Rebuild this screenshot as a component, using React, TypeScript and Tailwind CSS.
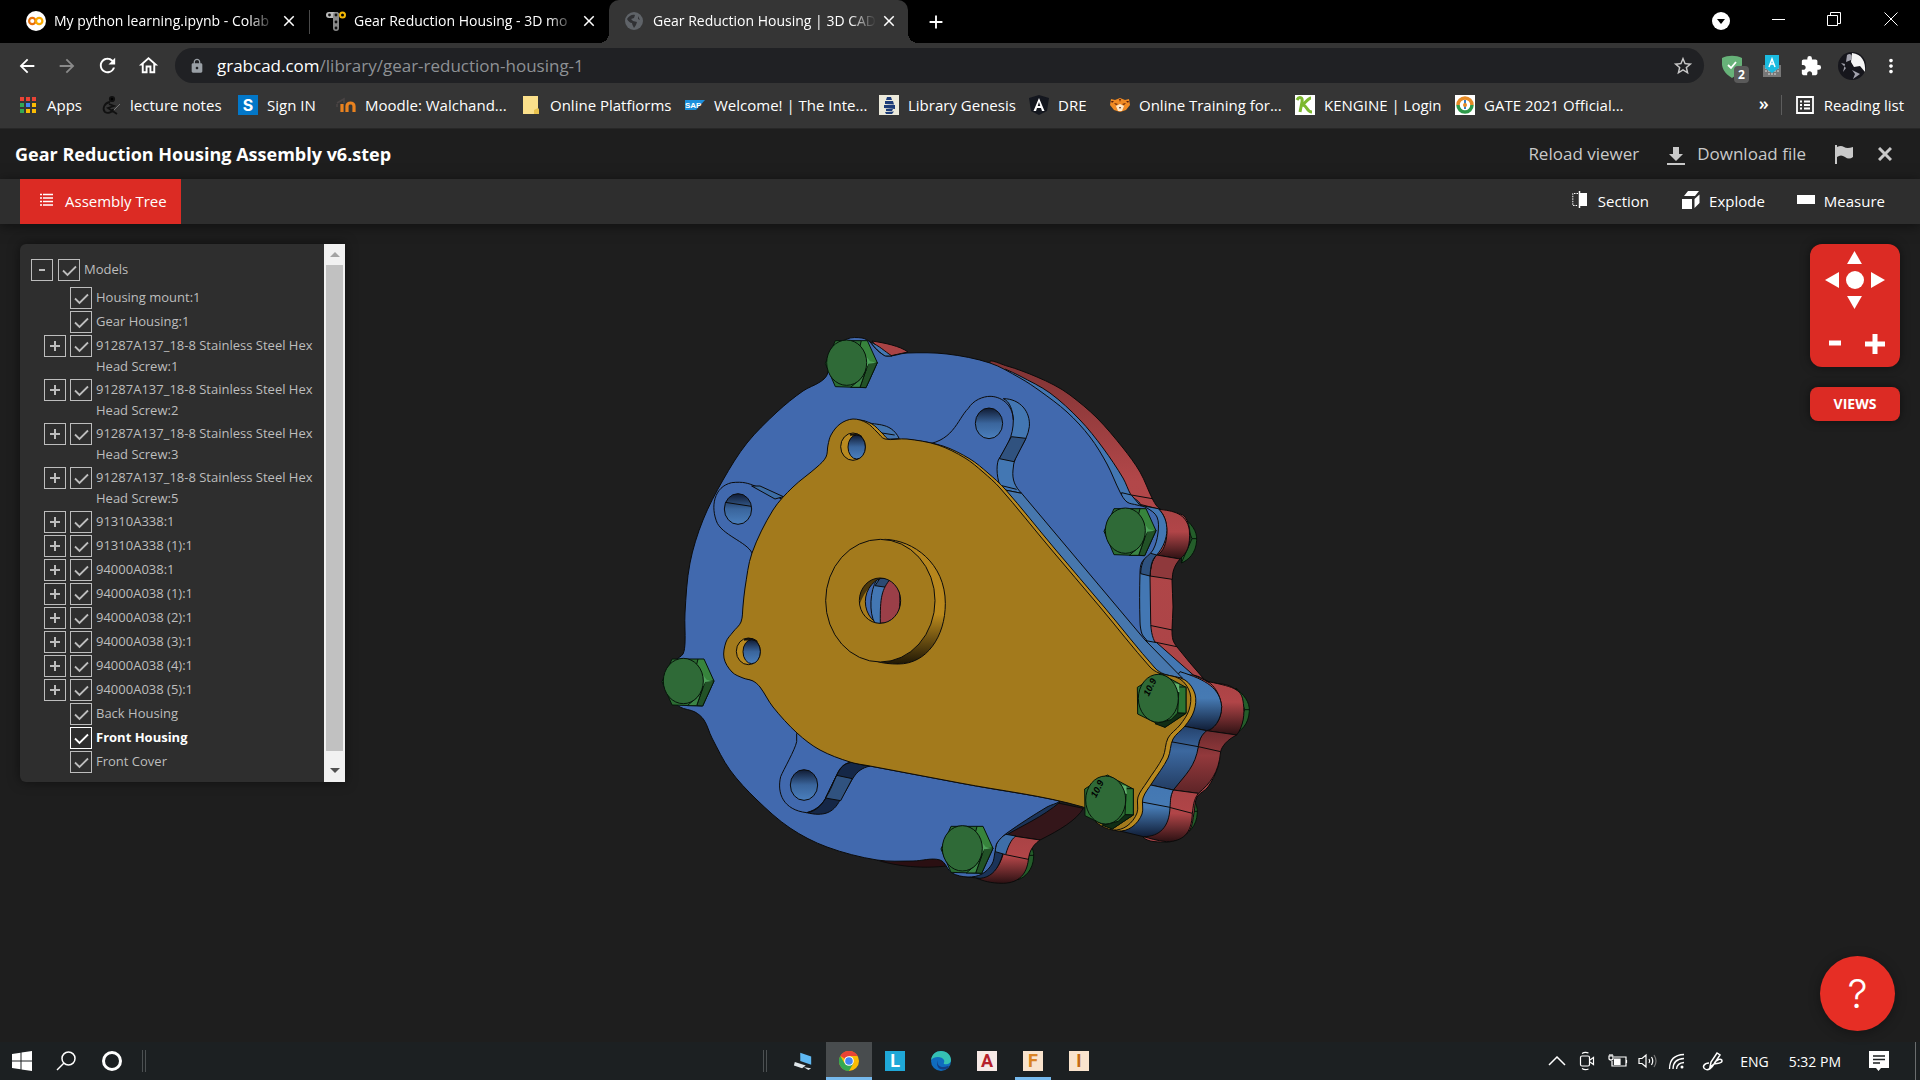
import { useState, type ReactNode } from "react";
import {
  MdArrowBack,
  MdArrowForward,
  MdRefresh,
  MdOutlineHome,
  MdLock,
  MdStarBorder,
  MdExtension,
  MdMoreVert,
  MdClose,
  MdAdd,
} from "react-icons/md";

type Pt = [number, number];

/** Closed or open Catmull-Rom curve through the given points. */
function smooth(pts: Pt[], closed = false): string {
  const n = pts.length;
  const at = (i: number): Pt => (closed ? pts[(i + n) % n] : pts[Math.max(0, Math.min(n - 1, i))]);
  let d = `M${pts[0][0]} ${pts[0][1]}`;
  const count = closed ? n : n - 1;
  for (let i = 0; i < count; i++) {
    const [p0, p1, p2, p3] = [at(i - 1), at(i), at(i + 1), at(i + 2)];
    const len = Math.hypot(p2[0] - p1[0], p2[1] - p1[1]);
    const tangent = (a: Pt, b: Pt): Pt => {
      const l = Math.hypot(b[0] - a[0], b[1] - a[1]) || 1;
      return [((b[0] - a[0]) / l) * len * 0.33, ((b[1] - a[1]) / l) * len * 0.33];
    };
    const t1 = tangent(p0, p2);
    const t2 = tangent(p1, p3);
    d += `C${(p1[0] + t1[0]).toFixed(1)} ${(p1[1] + t1[1]).toFixed(1)} ${(p2[0] - t2[0]).toFixed(1)} ${(p2[1] - t2[1]).toFixed(1)} ${p2[0]} ${p2[1]}`;
  }
  return closed ? d + "Z" : d;
}

const RED_BODY: Pt[] = [
  [990, 363], [1007, 366], [1022, 371], [1037, 377], [1054, 385], [1070, 395], [1097, 418], [1123, 448], [1140, 472], [1153, 500], [1160, 509],
  [1173, 512], [1185, 517], [1190, 533], [1188, 547], [1180, 558], [1173, 568], [1172, 580], [1173, 607], [1172, 630],
  [1173, 640], [1177, 647], [1203, 678], [1208, 682], [1227, 685], [1238, 692], [1243, 707], [1242, 723], [1235, 735],
  [1227, 740], [1220, 752], [1218, 767], [1208, 787], [1197, 797], [1194, 813], [1190, 830], [1180, 838], [1167, 842],
  [1143, 837], [1090, 760], [1050, 560], [1020, 400],
];

const BLUE_EDGE: Pt[] = [
  [1005, 369], [1020, 376], [1050, 393], [1080, 420], [1103, 448], [1123, 478], [1131, 495], [1140, 506], [1120, 520], [1060, 440],
];

const BLUE_BODY: Pt[] = [
  [827, 375], [820, 382], [803, 391], [777, 412], [747, 443], [723, 480], [703, 520], [690, 563], [685, 613],
  [685, 643], [683, 654], [676, 661], [674, 700], [680, 707], [695, 712], [704, 720], [712, 738], [730, 770], [757, 800],
  [790, 828], [827, 847], [877, 860], [913, 861], [940, 860], [952, 873], [968, 877], [982, 874], [992, 864], [995, 852],
  [997, 843], [1007, 833], [1047, 807], [1060, 801], [1100, 760], [1143, 700], [1147, 642], [1142, 634], [1140, 622],
  [1140, 573], [1142, 562], [1153, 550], [1158, 533], [1157, 517], [1147, 508], [1137, 505], [1127, 502], [1120, 492],
  [1107, 464], [1090, 437], [1067, 412], [1040, 391], [1020, 378], [990, 363], [947, 354], [907, 353], [887, 356], [877, 350],
  [870, 342], [862, 338], [847, 339], [834, 350],
];

const GOLD_BODY: Pt[] = [
  [828, 445], [831, 435], [840, 424], [853, 419], [867, 423], [877, 432], [885, 439], [907, 439], [938, 445],
  [965, 458], [983, 472], [1000, 488], [1050, 548], [1100, 607], [1150, 667], [1159, 673], [1180, 679], [1190, 693], [1189, 710],
  [1180, 725], [1168, 738], [1163, 757], [1147, 782], [1138, 797], [1137, 813], [1127, 826], [1113, 830], [1097, 823],
  [1083, 807], [960, 783], [870, 766], [850, 762], [820, 750], [797, 733], [773, 707], [760, 687], [753, 681],
  [743, 678], [732, 672], [724, 658], [726, 642], [733, 632], [741, 622], [743, 606], [745, 588], [752, 553],
  [773, 510], [793, 487], [817, 467], [826, 457],
];

function Bolt({ x, y }: { x: number; y: number }) {
  return (
    <g transform={`translate(${x} ${y})`} stroke="#06140a" strokeWidth="3" strokeLinejoin="round">
      <path d="M-64 2L-34-66H44L92 0L58 75L-34 72Z" fill="#2c6d33" />
      <path d="M44-66H62L92 0L66 0L40-50Z" fill="#37843c" />
      <path d="M66 0L92 0L58 75L40 74Z" fill="#225227" />
      <path d="M58-20L70-4L92 0L66 3L57 20Z" fill="#4fa25b" stroke="none" />
      <path d="M40 50L58 22L40 74H12Z" fill="#3b8545" />
      <ellipse rx="60" ry="68" fill="#2f6a37" />
    </g>
  );
}

function MarkedBolt({ x, y }: { x: number; y: number }) {
  return (
    <g transform={`translate(${x} ${y})`} stroke="#06140a" strokeWidth="3" strokeLinejoin="round">
      <path d="M-63-33L5-75L83-33V45L20 87L-62 47Z" fill="#2c6d33" />
      <path d="M62-34H83V45L58 44Z" fill="#2b7433" />
      <path d="M58 44L83 45L20 87L-10 76L38 64Z" fill="#102d14" />
      <path d="M46-46L62-42L64-18L56-20Z" fill="#62b36e" stroke="none" />
      <ellipse rx="60" ry="72" fill="#2f6a37" />
      <text
        transform="rotate(-64)"
        x="-8"
        y="-28"
        fontFamily="Liberation Sans, sans-serif"
        fontWeight="700"
        fontStyle="italic"
        fontSize="28"
        fill="#000"
        stroke="none"
      >
        10.9
      </text>
    </g>
  );
}

function Nut({ x, y }: { x: number; y: number }) {
  return (
    <g transform={`translate(${x} ${y})`} stroke="#06140a" strokeWidth="3">
      <path d="M-14-70C8-50 28-30 26 0C24 40 0 60-20 68Z" fill="#245d2a" />
      <path d="M-14-70L12-5L-20 68M12-5H26" fill="none" />
    </g>
  );
}

function GearHousing() {
  return (
    <svg viewBox="0 0 1920 1920" className="h-[640px] w-[640px]" role="img" aria-label="Gear reduction housing model">
      <defs>
        <linearGradient id="hole" x1="0" y1="0" x2="0" y2="1">
          <stop offset="0" stopColor="#101b33" />
          <stop offset=".5" stopColor="#3a659c" />
          <stop offset="1" stopColor="#4a7fbd" />
        </linearGradient>
        <linearGradient id="blueLug" x1="0" y1="0" x2="0" y2="1">
          <stop offset="0" stopColor="#4377b3" />
          <stop offset=".45" stopColor="#467ab3" />
          <stop offset="1" stopColor="#101d36" />
        </linearGradient>
        <linearGradient id="redLug" x1="0" y1="0" x2="0" y2="1">
          <stop offset="0" stopColor="#a94345" />
          <stop offset=".45" stopColor="#b14548" />
          <stop offset="1" stopColor="#2c1113" />
        </linearGradient>
        <linearGradient id="blueDip" x1="0" y1="0" x2="0" y2="1">
          <stop offset="0" stopColor="#23406a" />
          <stop offset=".4" stopColor="#3c689f" />
          <stop offset="1" stopColor="#233d63" />
        </linearGradient>
        <linearGradient id="redDip" x1="0" y1="0" x2="0" y2="1">
          <stop offset="0" stopColor="#6b2a2d" />
          <stop offset=".4" stopColor="#93393c" />
          <stop offset="1" stopColor="#5d2427" />
        </linearGradient>
        <linearGradient id="goldRim" x1="0" y1="0" x2="0" y2="1">
          <stop offset="0" stopColor="#b3831c" />
          <stop offset=".6" stopColor="#bb8a1d" />
          <stop offset="1" stopColor="#1f1705" />
        </linearGradient>
        <linearGradient id="redArc" x1="0" y1="0" x2="0" y2="1">
          <stop offset="0" stopColor="#7f3334" />
          <stop offset=".25" stopColor="#b24749" />
          <stop offset="1" stopColor="#a64245" />
        </linearGradient>
      </defs>

      {/* nuts behind the flange */}
      <Nut x={1644} y={682} />
      <Nut x={1802} y={1195} />
      <Nut x={1646} y={1500} />
      <Nut x={1155} y={1632} />

      {/* back housing */}
      <g transform="scale(3) translate(-640 -313)" stroke="#0b0b0b" strokeWidth="1">
        <path d={smooth(RED_BODY, true)} fill="url(#redArc)" />
        <path d="M872 341C885 343 900 346 908 352L885 357Z" fill="#a94345" />
        <path d="M877 860C905 869 940 869 962 863V855Z" fill="#2a0f12" />
      </g>
      <g transform="translate(960 861)" stroke="#0b0b0b" strokeWidth="3">
        <path d="M275 605L370 625C350 660 300 690 240 720L140 705Z" fill="#34161a" />
        <path d="M140 705L240 720C212 740 208 760 205 780C200 820 180 848 130 850C90 850 70 842 50 835C100 830 130 800 140 705Z" fill="url(#redLug)" />
        <path d="M700 225C760 240 780 280 785 320C785 360 760 390 740 392L830 405C850 380 855 340 850 310C846 270 830 262 745 245Z" fill="url(#redLug)" />
        <path d="M740 392L830 405C800 420 785 440 782 455C776 520 750 550 715 580L640 570C680 520 700 480 715 440C718 420 725 400 740 392Z" fill="url(#redDip)" />
        <path d="M640 570L715 580C700 600 700 620 697 640C695 700 670 724 620 725C590 722 570 715 550 710C600 700 625 680 628 620C630 600 633 580 640 570Z" fill="url(#redLug)" />
        <path d="M715 440L782 455M628 622L697 640M137 764L205 778M540 70L637 90M555 120L650 140" fill="none" />
      </g>
      <g transform="translate(900 21)" stroke="#0b0b0b" strokeWidth="3">
        <path d="M574 525L637 536M600 553L660 568" />
        <path d="M655 568C700 572 740 580 748 630C752 680 740 700 720 717L650 705C690 690 690 590 655 568Z" fill="url(#redLug)" />
        <path d="M650 705L720 717C700 740 697 760 697 778L630 768C632 740 636 720 650 705Z" fill="#8f393c" />
      </g>

      {/* front housing: edge, then face */}
      <g transform="scale(3) translate(-640 -313)" stroke="#0b0b0b" strokeWidth="1">
        <path d={smooth(BLUE_EDGE)} fill="#4377b3" />
      </g>
      <g transform="translate(900 21)" stroke="#0b0b0b" strokeWidth="3">
        <path d="M545 518L574 525L600 556L655 566C690 600 690 660 650 705C634 720 632 740 630 768L632 900C632 940 640 960 650 975L600 960L540 640Z" fill="#4377b3" />
        <path d="M650 705C634 720 632 740 630 768L602 761C602 740 610 715 625 698Z" fill="#2f527f" />
      </g>
      <g transform="translate(960 861)" stroke="#0b0b0b" strokeWidth="3">
        <path d="M548 120L590 128L700 225L620 225L560 200Z" fill="#4377b3" />
        <path d="M660 215C740 240 780 265 785 320C785 360 760 390 740 392L655 375L600 300Z" fill="url(#blueLug)" />
        <path d="M655 375L740 392C718 410 716 430 715 440C705 500 680 520 640 570L550 550C580 500 620 470 632 425C635 400 640 390 655 375Z" fill="url(#blueDip)" />
        <path d="M632 425L715 440" />
        <path d="M550 550L640 570C630 590 632 600 630 622C628 680 600 710 550 710L480 693C530 690 535 640 535 600Z" fill="url(#blueLug)" />
        <path d="M535 604L630 622" />
        <path d="M250 600L300 606C250 650 180 680 140 705C130 760 120 830 60 835L0 828L60 790L100 700Z" fill="#1b3358" />
        <path d="M106 755L137 764C146 730 160 712 168 708L138 703C110 715 106 740 106 755Z" fill="#3e6ea8" />
      </g>
      <g transform="scale(3) translate(-640 -313)" stroke="#0b0b0b" strokeWidth="1">
        <path d={smooth(BLUE_BODY, true)} fill="#4169ae" />
        <path d="M870 342C880 346 884 351 892 356L885 356C876 350 874 346 870 342Z" fill="#4377b3" />
      </g>

      {/* front housing: raised lugs */}
      <g transform="translate(60 21)" stroke="#0b0b0b" strokeWidth="3" fill="none">
        <path d="M278 705C270 670 195 650 172 610C150 560 162 500 215 488C250 484 265 490 285 498L365 537" />
        <path d="M275 498H300L370 530L345 537Z" fill="#3d6da5" />
        <ellipse cx="234" cy="567" rx="41" ry="46" fill="url(#hole)" />
        <path d="M196 547L274 559" />
        <path d="M612 303C640 320 690 300 718 356L675 358Z" fill="#4475ae" />
        <path d="M640 335L704 345" />
      </g>
      <g transform="translate(900 21)" stroke="#0b0b0b" strokeWidth="3" fill="none">
        <path d="M190 236C240 236 272 275 268 320C262 370 220 400 219 450C216 480 225 500 245 520L185 508C170 480 168 440 175 420C200 380 220 350 220 300C218 270 210 245 190 236Z" fill="#4377b3" />
        <path d="M214 350L258 355L222 425L178 416Z" fill="#30527f" />
        <path d="M-60 375C40 370 50 300 85 265C100 240 130 229 150 229C180 229 218 250 220 300" />
        <ellipse cx="147" cy="310" rx="41" ry="46" fill="url(#hole)" />
        <path d="M185 497L230 508" />
        <path d="M185 508L245 520L615 960L728 1075L610 1055Z" fill="#4777ad" />
      </g>
      <g transform="translate(0 861)" stroke="#0b0b0b" strokeWidth="3" fill="none">
        <path d="M690 498C640 510 640 540 600 600C580 640 550 650 500 638C560 620 560 580 590 526C600 505 610 490 635 487Z" fill="#152747" />
        <path d="M590 526L637 536L602 602L556 594Z" fill="#30527f" />
        <path d="M470 400V425C465 450 430 510 422 530C410 580 430 630 500 638C530 635 550 610 562 585C590 540 590 490 635 487" />
        <ellipse cx="492" cy="555" rx="41" ry="46" fill="url(#hole)" />
      </g>

      {/* front cover: rim, then face */}
      <g transform="scale(3) translate(-640 -313)" stroke="#0b0b0b" strokeWidth="1">
        <path d={smooth(GOLD_BODY, true)} fill="#b98a1f" transform="translate(5 1)" />
        <path d={smooth(GOLD_BODY, true)} fill="#a37a1c" />
      </g>

      <g transform="translate(60 21)" stroke="#0b0b0b" strokeWidth="3">
        <path d="M674 658C760 660 856 730 856 850C856 950 800 1032 715 1032C690 1032 670 1030 650 1024Z" fill="url(#goldRim)" />
        <ellipse cx="661" cy="842" rx="164" ry="184" fill="#a37a1c" />
        <clipPath id="bore">
          <ellipse cx="660" cy="842" rx="62" ry="68" />
        </clipPath>
        <g clipPath="url(#bore)">
          <rect x="590" y="760" width="150" height="160" fill="#a87c1c" />
          <path d="M590 760H740L700 785C650 770 620 800 600 850Z" fill="#4b380d" stroke="none" />
          <ellipse cx="680" cy="845" rx="64" ry="72" fill="#4169ae" />
          <path d="M650 780C630 810 626 880 645 910L700 915V770Z" fill="#4377b3" />
          <path d="M645 797L680 802L692 775H660Z" fill="#2c4a73" />
          <path d="M692 775C665 810 660 830 661 910L740 900V780Z" fill="#9b3f48" />
          <path d="M712 900C722 860 720 830 718 810" fill="none" />
        </g>
        <ellipse cx="660" cy="842" rx="62" ry="68" fill="none" />
        <ellipse cx="579" cy="380" rx="37" ry="41" fill="#b98a1f" />
        <path d="M570 345C590 338 600 345 606 350L590 346Z" fill="#3b2b0a" />
        <ellipse cx="590" cy="381" rx="26" ry="36" fill="url(#hole)" />
      </g>
      <g transform="translate(0 861)" stroke="#0b0b0b" strokeWidth="3">
        <ellipse cx="325" cy="154" rx="36" ry="40" fill="#b98a1f" />
        <path d="M312 120C330 110 345 118 352 124L335 120Z" fill="#3b2b0a" />
        <ellipse cx="335" cy="155" rx="26" ry="36" fill="url(#hole)" />
      </g>

      <Bolt x={620} y={149} />
      <Bolt x={1456} y={653} />
      <Bolt x={130} y={1104} />
      <Bolt x={967} y={1606} />
      <MarkedBolt x={1555} y={1156} />
      <MarkedBolt x={1397} y={1461} />
    </svg>
  );
}

/* ---------- browser chrome ---------- */

function ColabIcon() {
  return (
    <svg viewBox="0 0 20 20" className="h-5 w-5">
      <circle cx="10" cy="10" r="10" fill="#fff" />
      <circle cx="6.3" cy="10" r="3.2" fill="none" stroke="#e8710a" strokeWidth="2.2" />
      <circle cx="13.2" cy="10" r="3.2" fill="none" stroke="#f9ab00" strokeWidth="2.2" />
    </svg>
  );
}

function PartsIcon() {
  return (
    <svg viewBox="0 0 20 20" className="h-5 w-5">
      <rect x="0" y="1" width="13" height="6" rx="3" fill="#bbb" />
      <rect x="7" y="1" width="6" height="19" rx="3" fill="#8a8a8a" />
      <circle cx="3.5" cy="4" r="1.4" fill="#111" />
      <circle cx="10" cy="4" r="1.4" fill="#111" />
      <circle cx="10" cy="11" r="1.4" fill="#111" />
      <circle cx="10" cy="17" r="1.4" fill="#111" />
      <circle cx="16.5" cy="4" r="2.5" fill="none" stroke="#f2b705" strokeWidth="2" />
    </svg>
  );
}

function GlobeIcon() {
  return (
    <svg viewBox="0 0 18 18" className="h-[18px] w-[18px]">
      <circle cx="9" cy="9" r="9" fill="#5f6368" />
      <path d="M2 7C4 4 7 2 10 3L9 6L6 7L8 9L12 10L11 13L9 16C8 14 7 12 7 11C5 11 3 9 2 7ZM13 4L15 8L13 7Z" fill="#303134" />
    </svg>
  );
}

function Tab({ icon, title, active }: { icon: ReactNode; title: string; active?: boolean }) {
  return (
    <div
      className={
        active
          ? "relative flex h-full w-[299px] items-center rounded-t-[10px] bg-[#353535] pr-2.5 pb-0.5 pl-4"
          : "relative flex h-full w-[299px] items-center pr-2.5 pb-0.5 pl-4"
      }
    >
      {active && (
        <>
          <span className="absolute bottom-0 -left-2.5 h-2.5 w-2.5 bg-[radial-gradient(circle_at_0_0,#000_10px,#353535_10px)]" />
          <span className="absolute -right-2.5 bottom-0 h-2.5 w-2.5 bg-[radial-gradient(circle_at_100%_0,#000_10px,#353535_10px)]" />
        </>
      )}
      <span className="flex w-7 shrink-0">{icon}</span>
      <span className="flex-1 text-[14px] whitespace-nowrap text-white [mask-image:linear-gradient(to_right,#000_88%,transparent)]">
        {title}
      </span>
      <button aria-label={`Close ${title}`} className="ml-1 flex h-5 w-5 items-center justify-center text-white">
        <MdClose className="h-[18px] w-[18px]" />
      </button>
    </div>
  );
}

function BookmarkIcon({ name }: { name: string }) {
  switch (name) {
    case "apps":
      return (
        <svg viewBox="0 0 20 20" className="h-5 w-5">
          {["#ea4335", "#ea4335", "#ea4335", "#34a853", "#4285f4", "#fbbc04", "#34a853", "#fbbc04", "#fbbc04"].map((c, i) => (
            <rect key={i} x={2 + (i % 3) * 6} y={2 + Math.floor(i / 3) * 6} width="4" height="4" fill={c} />
          ))}
        </svg>
      );
    case "notes":
      return (
        <svg viewBox="0 0 20 20" className="h-5 w-5" fill="none" stroke="#111" strokeWidth="1.8">
          <circle cx="11" cy="4" r="2.2" fill="#000" />
          <path d="M9 7C3 8 1 14 4 17C7 19 12 17 12 14M8 9L13 11L7 13L16 19" />
          <path d="M19 9L13 15" stroke="#777" strokeWidth="1" />
        </svg>
      );
    case "s":
      return (
        <span className="flex h-5 w-5 items-center justify-center bg-[#0277c8] font-[Inter] text-base font-bold text-white">
          S
        </span>
      );
    case "moodle":
      return (
        <svg viewBox="0 0 20 20" className="h-5 w-5" fill="none" stroke="#e9821f" strokeWidth="3.2">
          <path d="M6 17V9M11 17V11C11 7 18 7 18 11V17" />
          <path d="M1 8L8 4L8 8M1 9V12" stroke="#4a4444" strokeWidth="1.6" />
        </svg>
      );
    case "folder":
      return (
        <svg viewBox="0 0 20 20" className="h-5 w-5">
          <path d="M2 1H17V13L18 15V19H2Z" fill="#fbe08b" />
          <path d="M13 19V15L17 13L18 15V19Z" fill="#e9c34e" />
        </svg>
      );
    case "sap":
      return (
        <svg viewBox="0 0 20 20" className="h-5 w-5">
          <path d="M0 5H20L11 15H0Z" fill="#1b8fdc" />
          <text x="0" y="13" fontSize="8" fontWeight="700" fontFamily="Liberation Sans, sans-serif" fill="#fff">
            SAP
          </text>
        </svg>
      );
    case "libgen":
      return (
        <svg viewBox="0 0 20 20" className="h-5 w-5">
          <rect width="20" height="20" fill="#eceadb" />
          <path d="M8 2L12 2L13 5L7 5ZM6 6L14 6L15 9.500L6 9ZM5 10L16 10L16 14L5 13ZM7 14H14L13 16H7ZM6 17L15 16.500L13 19H7Z" fill="#1d3c78" />
        </svg>
      );
    case "angular":
      return (
        <svg viewBox="0 0 20 20" className="h-5 w-5">
          <path d="M10 0L20 3L18 16L10 20L2 16L0 3Z" fill="#14171f" />
          <path d="M10 3L4.5 16H7L8 13H12L13 16H15.500ZM10 7L11.300 11H8.700Z" fill="#fff" fillRule="evenodd" />
        </svg>
      );
    case "tiger":
      return (
        <svg viewBox="0 0 20 20" className="h-5 w-5">
          <path d="M1 4L5 5L10 3L15 5L19 4L20 10L16 15L10 17L4 15L0 10Z" fill="#f08a24" />
          <path d="M6 11L10 9L14 11L12 16H8Z" fill="#fbe6c8" />
          <path d="M4 8L8 9L6 10ZM16 8L12 9L14 10ZM9 4H11L10 7ZM9 12H11L10 14ZM1 6L4 6L2 8ZM19 6L16 6L18 8Z" fill="#5b1f0a" />
        </svg>
      );
    case "k":
      return (
        <svg viewBox="0 0 20 20" className="h-5 w-5">
          <rect width="20" height="20" fill="#fff" />
          <path d="M2 5C4 1 8 2 7 7L5 17M16 3C13 3 11 8 7 10C12 9 11 17 17 17" fill="none" stroke="#7cb82f" strokeWidth="3" />
        </svg>
      );
    default:
      return (
        <svg viewBox="0 0 20 20" className="h-5 w-5">
          <rect width="20" height="20" fill="#fff" />
          <path d="M3 10A7 7 0 0 1 17 10" fill="none" stroke="#e58a26" strokeWidth="3.500" />
          <path d="M3 10A7 7 0 0 0 17 10" fill="none" stroke="#2e9a4a" strokeWidth="3.500" />
          <path d="M10 5V14" stroke="#3a7fc4" strokeWidth="2" />
          <circle cx="10" cy="10" r="2" fill="#e58a26" />
        </svg>
      );
  }
}

const BOOKMARKS = [
  { icon: "apps", label: "Apps", width: "w-[83px]" },
  { icon: "notes", label: "lecture notes", width: "w-[137px]" },
  { icon: "s", label: "Sign IN", width: "w-[98px]" },
  { icon: "moodle", label: "Moodle: Walchand...", width: "w-[185px]" },
  { icon: "folder", label: "Online Platfiorms", width: "w-[164px]" },
  { icon: "sap", label: "Welcome! | The Inte...", width: "w-[194px]" },
  { icon: "libgen", label: "Library Genesis", width: "w-[150px]" },
  { icon: "angular", label: "DRE", width: "w-[81px]" },
  { icon: "tiger", label: "Online Training for...", width: "w-[185px]" },
  { icon: "k", label: "KENGINE | Login", width: "w-[160px]" },
  { icon: "gate", label: "GATE 2021 Official...", width: "w-[170px]" },
];

function BrowserChrome() {
  return (
    <header className="bg-[#353535] text-white">
      <div className="flex h-[43px] items-stretch bg-black pl-2.5">
        <Tab icon={<ColabIcon />} title="My python learning.ipynb - Colab" />
        <span className="mt-2.5 h-6 w-px bg-[#4a4a4a]" />
        <Tab icon={<PartsIcon />} title="Gear Reduction Housing - 3D mo" />
        <Tab icon={<GlobeIcon />} title="Gear Reduction Housing | 3D CAD" active />
        <button aria-label="New tab" className="ml-4 flex h-[43px] w-6 items-center justify-center">
          <MdAdd className="h-[22px] w-[22px]" />
        </button>
        <div className="ml-auto flex items-start">
          <button aria-label="Search tabs" className="mt-3 mr-5 h-[18px] w-[18px]">
            <svg viewBox="0 0 18 18">
              <circle cx="9" cy="9" r="9" fill="#fff" />
              <path d="M5 7H13L9 12Z" fill="#000" />
            </svg>
          </button>
          <button aria-label="Minimize" className="flex h-[38px] w-14 items-center justify-center">
            <span className="h-px w-[13px] bg-white" />
          </button>
          <button aria-label="Restore" className="flex h-[38px] w-14 items-center justify-center">
            <svg viewBox="0 0 14 14" className="h-3.5 w-3.5" fill="none" stroke="#fff">
              <path d="M.5 3.500H10.500V13.500H.500ZM3.500 3V.500H13.500V11.500H11" />
            </svg>
          </button>
          <button aria-label="Close window" className="flex h-[38px] w-[58px] items-center justify-center">
            <svg viewBox="0 0 14 14" className="h-3.5 w-3.5" stroke="#fff">
              <path d="M.5 .5L13.500 13.500M13.500 .5L.5 13.500" />
            </svg>
          </button>
        </div>
      </div>

      <div className="flex h-[45px] items-center pr-[18px] pl-4">
        <div className="flex w-[159px] items-center gap-[18px]">
          <button aria-label="Back"><MdArrowBack className="h-[22px] w-[22px]" /></button>
          <button aria-label="Forward"><MdArrowForward className="h-[22px] w-[22px] text-[#8a8a8a]" /></button>
          <button aria-label="Reload"><MdRefresh className="h-[23px] w-[23px]" /></button>
          <button aria-label="Home"><MdOutlineHome className="h-[23px] w-[23px]" /></button>
        </div>
        <div className="flex h-[35px] flex-1 items-center rounded-full bg-[#202124] pr-2.5 pl-3.5">
          <MdLock className="h-4 w-4 text-[#9aa0a6]" />
          <a href="#address" className="ml-3 flex-1 text-[17px] text-[#8e9195]">
            <span className="text-white">grabcad.com</span>/library/gear-reduction-housing-1
          </a>
          <button aria-label="Bookmark this page">
            <MdStarBorder className="h-[22px] w-[22px] text-[#c8c8c8]" />
          </button>
        </div>
        <div className="flex items-center">
          <button aria-label="AdGuard" className="relative ml-4 h-6 w-6">
            <svg viewBox="0 0 24 24">
              <path d="M2 4C8 1 16 1 22 4V11C21 17 17 21 12 24C7 21 3 17 2 11Z" fill="#67b279" />
              <path d="M8 11L11 14L16 8" fill="none" stroke="#fff" strokeWidth="1.800" />
            </svg>
            <span className="absolute top-3 left-3.5 h-[17px] w-[15px] rounded-sm bg-[#5a5a5a] text-center text-xs leading-[17px] font-bold">
              2
            </span>
          </button>
          <button aria-label="Input tools" className="ml-4 h-6 w-6">
            <svg viewBox="0 0 24 24">
              <rect x="3" y="11" width="18" height="12" fill="#777" />
              <path d="M5 14H19M5 17H19M8 20H16" stroke="#ddd" strokeDasharray="2 1" />
              <path d="M5 1H19V14L12 19L5 14Z" fill="#1bbbe0" />
              <path d="M9 13L12 5L15 13M10 10H14" fill="none" stroke="#fff" strokeWidth="1.500" />
            </svg>
          </button>
          <button aria-label="Extensions" className="ml-4">
            <MdExtension className="h-[22px] w-[22px]" />
          </button>
          <button aria-label="Profile" className="ml-4 h-7 w-7 overflow-hidden rounded-full">
            <svg viewBox="0 0 28 28">
              <rect width="28" height="28" fill="#16161c" />
              <path d="M14 1C24 2 28 10 27 20L22 14L16 15L13 10Z" fill="#f4f4f4" />
              <path d="M9 3C13 0 15 4 13 8L8 10ZM3 11L8 16L5 20L7 12ZM14 18L22 22L15 27L17 22Z" fill="#a3a3ae" />
            </svg>
          </button>
          <button aria-label="Menu" className="ml-3.5">
            <MdMoreVert className="h-[22px] w-[22px]" />
          </button>
        </div>
      </div>

      <nav className="flex h-[41px] items-center border-b border-[#272727] pb-1.5 pl-[18px] text-[15px] whitespace-nowrap">
        {BOOKMARKS.map((b) => (
          <a key={b.label} href="#bookmark" className={`flex shrink-0 items-center gap-[9px] ${b.width}`}>
            <span className="h-5 w-5 shrink-0">
              <BookmarkIcon name={b.icon} />
            </span>
            {b.label}
          </a>
        ))}
        <button aria-label="More bookmarks" className="ml-auto pr-3 pb-1 text-lg font-semibold">»</button>
        <span className="h-5 w-px bg-[#5d5d5d]" />
        <button className="ml-[14px] flex items-center gap-2.5 pr-4">
          <svg viewBox="0 0 18 18" className="h-[18px] w-[18px]" fill="none" stroke="#fff" strokeWidth="1.800">
            <path d="M1 1H17V17H1ZM4 5.500H6M4 9H6M4 12.500H6M8 5.500H14M8 9H14M8 12.500H14" />
          </svg>
          Reading list
        </button>
      </nav>
    </header>
  );
}

/* ---------- viewer ---------- */

type TreeNode = { label: string; expandable?: boolean; selected?: boolean };

const NODES: TreeNode[] = [
  { label: "Housing mount:1" },
  { label: "Gear Housing:1" },
  { label: "91287A137_18-8 Stainless Steel Hex Head Screw:1", expandable: true },
  { label: "91287A137_18-8 Stainless Steel Hex Head Screw:2", expandable: true },
  { label: "91287A137_18-8 Stainless Steel Hex Head Screw:3", expandable: true },
  { label: "91287A137_18-8 Stainless Steel Hex Head Screw:5", expandable: true },
  { label: "91310A338:1", expandable: true },
  { label: "91310A338 (1):1", expandable: true },
  { label: "94000A038:1", expandable: true },
  { label: "94000A038 (1):1", expandable: true },
  { label: "94000A038 (2):1", expandable: true },
  { label: "94000A038 (3):1", expandable: true },
  { label: "94000A038 (4):1", expandable: true },
  { label: "94000A038 (5):1", expandable: true },
  { label: "Back Housing" },
  { label: "Front Housing", selected: true },
  { label: "Front Cover" },
];

function TreeCheck({ label, selected }: { label: string; selected?: boolean }) {
  const [on, setOn] = useState(true);
  return (
    <label className={selected ? "flex items-start gap-1 font-bold text-white" : "flex items-start gap-1 text-[#bdbdbd]"}>
      <span className="relative h-[22px] w-[22px] shrink-0">
        <input
          type="checkbox"
          checked={on}
          onChange={() => setOn(!on)}
          className="block h-[22px] w-[22px] appearance-none border border-current"
        />
        {on && (
          <svg viewBox="0 0 22 22" className="pointer-events-none absolute inset-0" fill="none" stroke="currentColor" strokeWidth="1.800">
            <path d="M5 11.500L9.500 16L18 7.500" />
          </svg>
        )}
      </span>
      <span className="leading-[21px]">{label}</span>
    </label>
  );
}

function Expander({ open, label }: { open?: boolean; label: string }) {
  return (
    <button
      aria-label={`${open ? "Collapse" : "Expand"} ${label}`}
      className="flex h-[22px] w-[22px] shrink-0 items-center justify-center border border-[#bdbdbd]"
    >
      <svg viewBox="0 0 10 10" className="h-2.5 w-2.5" stroke="#bdbdbd" strokeWidth="2">
        <path d={open ? "M2 5H8" : "M0 5H10M5 0V10"} />
      </svg>
    </button>
  );
}

function AssemblyTree() {
  return (
    <aside className="flex w-[325px] overflow-hidden rounded-l-md bg-[#2e2e2e] shadow-[0_0_12px_rgba(0,0,0,0.5)]">
      <div className="flex-1 pt-[15px] pr-2 pb-[7px] pl-[11px] text-[13px]">
        <div className="flex gap-[5px] pb-1.5">
          <Expander open label="Models" />
          <TreeCheck label="Models" />
        </div>
        <ul className="pl-[13px]">
          {NODES.map((n) => (
            <li key={n.label} className="flex items-start gap-1 pb-0.5">
              {n.expandable ? <Expander label={n.label} /> : <span className="w-[22px] shrink-0" />}
              <TreeCheck label={n.label} selected={n.selected} />
            </li>
          ))}
        </ul>
      </div>
      <div className="flex w-[21px] flex-col items-center bg-[#f1f1f1]">
        <button aria-label="Scroll up" className="flex h-[21px] w-full items-center justify-center">
          <svg viewBox="0 0 10 5" className="h-[5px] w-2.5"><path d="M0 5L5 0L10 5Z" fill="#a3a3a3" /></svg>
        </button>
        <div className="w-[17px] flex-1 bg-[#c1c1c1]" />
        <button aria-label="Scroll down" className="flex h-[31px] w-full items-center justify-center pt-2">
          <svg viewBox="0 0 10 5" className="h-[5px] w-2.5"><path d="M0 0L5 5L10 0Z" fill="#505050" /></svg>
        </button>
      </div>
    </aside>
  );
}

function ViewControls() {
  return (
    <div className="flex w-[90px] flex-col gap-5 text-white">
      <div className="rounded-xl bg-[#dc2b24] pt-1.5 pb-[13px] shadow-[0_0_10px_rgba(0,0,0,0.5)]">
        <div className="grid grid-cols-3 grid-rows-[15px_30px_15px] place-items-center px-[11px]">
          <span />
          <button aria-label="Rotate up"><svg viewBox="0 0 16 14" className="h-[13px] w-[15px]"><path d="M8 0L16 14H0Z" fill="#fff" /></svg></button>
          <span />
          <button aria-label="Rotate left"><svg viewBox="0 0 14 16" className="h-4 w-3.5"><path d="M0 8L14 0V16Z" fill="#fff" /></svg></button>
          <button aria-label="Reset view" className="h-[18px] w-[18px] rounded-full bg-white" />
          <button aria-label="Rotate right"><svg viewBox="0 0 14 16" className="h-4 w-3.5"><path d="M14 8L0 0V16Z" fill="#fff" /></svg></button>
          <span />
          <button aria-label="Rotate down"><svg viewBox="0 0 16 14" className="h-[13px] w-[15px]"><path d="M8 14L16 0H0Z" fill="#fff" /></svg></button>
          <span />
        </div>
        <div className="mt-6 flex justify-between pr-[15px] pl-[19px]">
          <button aria-label="Zoom out"><svg viewBox="0 0 12 20" className="h-5 w-3"><path d="M0 6.500H12V11.500H0Z" fill="#fff" /></svg></button>
          <button aria-label="Zoom in"><svg viewBox="0 0 20 20" className="h-5 w-5"><path d="M7.500 0H12.500V7.500H20V12.500H12.500V20H7.500V12.500H0V7.500H7.500Z" fill="#fff" /></svg></button>
        </div>
      </div>
      <button className="h-[34px] rounded-lg bg-[#dc2b24] text-sm font-bold shadow-[0_0_10px_rgba(0,0,0,0.5)]">VIEWS</button>
    </div>
  );
}

/* ---------- taskbar ---------- */

function TaskIcon({ name }: { name: string }) {
  if (name === "pc")
    return (
      <svg viewBox="0 0 22 22" className="h-5 w-5">
        <path d="M8 2L20 6V15L8 11Z" fill="#5fb8f2" />
        <path d="M2 12L14 16L10 19L1 16ZM12 18L20 19L17 21Z" fill="#dfe6ea" />
      </svg>
    );
  if (name === "chrome")
    return (
      <svg viewBox="0 0 20 20" className="h-5 w-5">
        <circle cx="10" cy="10" r="10" fill="#fbbc04" />
        <path d="M10 10L1.300 5A10 10 0 0 1 18.700 5H10Z" fill="#ea4335" />
        <path d="M1.300 5A10 10 0 0 0 10 20L14.300 12.500L10 10L5.700 12.500Z" fill="#34a853" />
        <circle cx="10" cy="10" r="4.800" fill="#fff" />
        <circle cx="10" cy="10" r="3.800" fill="#4285f4" />
      </svg>
    );
  if (name === "edge")
    return (
      <svg viewBox="0 0 20 20" className="h-5 w-5">
        <circle cx="10" cy="10" r="10" fill="#0f6cbf" />
        <path d="M0 9C1 3 5 0 10 0C16 0 20 4 20 9C20 12 17 14 13 13C12 12 14 11 13 9C11 5 3 5 0 9Z" fill="#35c1b4" />
        <path d="M7 9C5 14 10 18 17 15C18 15 18 16 17 17C8 22 4 14 7 9Z" fill="#123f86" />
      </svg>
    );
  const letters: Record<string, { char: string; box: string }> = {
    l: { char: "L", box: "bg-[#1fa8d8] text-white" },
    a: { char: "A", box: "bg-[#f6e9e6] text-[#b5202b]" },
    f: { char: "F", box: "bg-[#f9e3cd] text-[#d98324]" },
    i: { char: "I", box: "bg-[#f9e3cd] text-[#c46a16]" },
  };
  const l = letters[name];
  return (
    <span className={`flex h-5 w-5 items-center justify-center font-['Roboto'] text-lg leading-5 font-bold ${l.box}`}>
      {l.char}
    </span>
  );
}

const TASKS = [
  { name: "pc", label: "This PC" },
  { name: "chrome", label: "Chrome", state: "focused" },
  { name: "l", label: "L" },
  { name: "edge", label: "Edge" },
  { name: "a", label: "AutoCAD" },
  { name: "f", label: "Fusion", state: "open" },
  { name: "i", label: "Inventor" },
];

function Separator() {
  return <span className="h-[22px] w-1 border-x border-[#4c5052]" />;
}

function Taskbar() {
  return (
    <footer className="grid h-[38px] grid-cols-[763px_1fr_auto] bg-[#1c2022] text-white">
      <div className="flex items-center pl-3">
        <button aria-label="Start" className="w-5">
          <svg viewBox="0 0 20 20" fill="#fff"><path d="M0 3L8.500 1.800V9.500H0ZM9.500 1.600L20 0V9.500H9.500ZM0 10.500H8.500V18.200L0 17ZM9.500 10.500H20V20L9.500 18.400Z" /></svg>
        </button>
        <button aria-label="Search" className="ml-6 w-5">
          <svg viewBox="0 0 20 20" fill="none" stroke="#fff" strokeWidth="1.500"><circle cx="12.500" cy="7.500" r="6.500" /><path d="M8 12L1 19" /></svg>
        </button>
        <button aria-label="Cortana" className="mr-5 ml-[26px] h-5 w-5 rounded-full border-[3px] border-white" />
        <Separator />
      </div>
      <div className="flex items-center">
        <Separator />
        <div className="flex h-full pl-[13px]">
          {TASKS.map((t) => (
            <button
              key={t.name}
              aria-label={t.label}
              className={
                t.state === "focused"
                  ? "flex w-[46px] items-center justify-center border-t-[3px] border-b-[3px] border-t-[#484c4e] border-b-[#76b9ed] bg-[#484c4e]"
                  : "flex w-[46px] items-center justify-center"
              }
            >
              {t.state === "open" ? (
                <span className="flex h-full w-9 items-center justify-center border-t-[3px] border-b-[3px] border-t-transparent border-b-[#76b9ed]">
                  <TaskIcon name={t.name} />
                </span>
              ) : (
                <TaskIcon name={t.name} />
              )}
            </button>
          ))}
        </div>
      </div>
      <div className="flex items-center text-[14px]">
        <svg viewBox="0 0 18 10" className="h-2.5 w-[18px]" fill="none" stroke="#fff" strokeWidth="1.500"><path d="M1 9L9 1L17 9" /></svg>
        <svg viewBox="0 0 18 20" className="ml-3 h-5 w-[18px]" fill="none" stroke="#fff" strokeWidth="1.200">
          <rect x="2.500" y="5" width="9" height="10" rx="1.500" />
          <path d="M12 9L15.500 6.500V13.500L12 11M4 2.500Q7 .5 10.500 2M4 17.500Q7 19.500 10.500 18" />
        </svg>
        <svg viewBox="0 0 20 18" className="ml-3 h-[18px] w-5" fill="none" stroke="#fff" strokeWidth="1.200">
          <path d="M6 5H18V14H4V9M18.500 8V11M1 4H5V7Q3 9 1 7ZM2 4V2M4 4V2" />
          <path d="M6.500 7H12V12.500H6.500Z" fill="#fff" />
        </svg>
        <svg viewBox="0 0 20 18" className="ml-2.5 h-[18px] w-5" fill="none" stroke="#fff" strokeWidth="1.200">
          <path d="M1 6.500H4L8 3V15L4 11.500H1ZM11 7Q12.500 9 11 11M13.500 5Q16 9 13.500 13" />
          <path d="M16 3Q20 9 16 15" stroke="#777" />
        </svg>
        <svg viewBox="0 0 18 18" className="ml-2.5 h-[18px] w-[18px]" fill="none" stroke="#fff" strokeWidth="1.300">
          <path d="M1.500 17Q1.500 3 16 2.500M5 17Q5 7 16 6.500M8.500 17Q9 11 16 10.500" />
          <circle cx="14" cy="15" r="1.500" fill="#fff" stroke="none" />
        </svg>
        <svg viewBox="0 0 22 20" className="ml-4 h-5 w-[22px]" fill="none" stroke="#fff" strokeWidth="1.500">
          <path d="M8 16L9 11L15 2L18 4L12 13ZM7 12C2 12 0 16 3 18C6 20 10 17 12 13C14 8 20 7 20 10C20 13 14 12 12 13" />
        </svg>
        <button className="ml-4">ENG</button>
        <time className="ml-5 text-[14px]">5:32 PM</time>
        <button aria-label="Notifications" className="mr-[26px] ml-7 w-5">
          <svg viewBox="0 0 20 20"><path d="M0 0H20V17H12L9.500 20L7 17H0Z" fill="#fff" /><path d="M4 5H16M4 8.500H16M4 12H11" stroke="#1c2022" strokeWidth="1.300" /></svg>
        </button>
        <span className="mr-1 h-[38px] w-px bg-[#6a6d6e]" />
      </div>
    </footer>
  );
}

export default function App() {
  return (
    <div className="flex min-h-screen flex-col bg-[#1e1e1e] font-['Open_Sans','Noto_Sans',sans-serif]">
      <BrowserChrome />

      <div className="flex h-[50px] items-center justify-between pr-7 pl-[15px]">
        <h1 className="text-lg font-bold text-white">Gear Reduction Housing Assembly v6.step</h1>
        <div className="flex items-center text-[17px] text-[#c9c9c9]">
          <button>Reload viewer</button>
          <button className="ml-7 flex items-center gap-3">
            <svg viewBox="0 0 18 18" className="mt-1 h-[18px] w-[18px]" fill="currentColor"><path d="M6 0H12V7H16L9 14L2 7H6ZM0 16H18V18H0Z" /></svg>
            Download file
          </button>
          <button aria-label="Report" className="ml-7">
            <svg viewBox="0 0 20 19" className="h-[19px] w-5" fill="currentColor"><path d="M1 0H3V2Q7 0 10 2T19 2V12Q15 15 11 12T3 12V19H1Z" /></svg>
          </button>
          <button aria-label="Close viewer" className="ml-6">
            <svg viewBox="0 0 14 14" className="h-[14px] w-[14px]" stroke="currentColor" strokeWidth="3"><path d="M1 1L13 13M13 1L1 13" /></svg>
          </button>
        </div>
      </div>

      <div className="z-10 flex h-[45px] items-center justify-between bg-[#2e2e2e] pr-[35px] pl-5 text-[15px] text-white shadow-[0_2px_12px_rgba(0,0,0,0.5)]">
        <button className="flex h-full items-center gap-3 bg-[#dc2b24] pr-[14px] pl-5">
          <svg viewBox="0 0 13 13" className="mb-1 h-[13px] w-[13px]" stroke="#fff" strokeWidth="1.500">
            <path d="M0 1.500H2M0 5H2M0 8.500H2M0 12H2M3 1.500H13M3 5H13M3 8.500H13M3 12H13" />
          </svg>
          Assembly Tree
        </button>
        <div className="flex items-center">
          <button className="flex items-center gap-[11px]">
            <svg viewBox="0 0 15 17" className="mb-1 h-[17px] w-[15px]" fill="none" stroke="#fff">
              <path d="M6 2.500H.8V14.500H6" strokeDasharray="1.500 1" />
              <path d="M7.500 0V17" strokeWidth="1.500" />
              <path d="M8 2H15V15H8Z" fill="#fff" stroke="none" />
            </svg>
            Section
          </button>
          <button className="ml-[33px] flex items-center gap-[9px]">
            <svg viewBox="0 0 18 18" className="mb-1 h-[18px] w-[18px]" fill="#fff"><path d="M0 8H10V18H0ZM2 5L6 0H17L13 5ZM12.500 8L17.500 3.500V12L12.500 17Z" /></svg>
            Explode
          </button>
          <button className="ml-8 flex items-center gap-[9px]">
            <span className="mb-1 h-[9px] w-[18px] bg-white" />
            Measure
          </button>
        </div>
      </div>

      <main className="relative flex flex-1 items-start justify-between px-5 pt-5">
        <div className="absolute inset-0 flex items-center justify-center">
          <GearHousing />
        </div>
        <div className="relative">
          <AssemblyTree />
        </div>
        <div className="relative">
          <ViewControls />
        </div>
        <button
          aria-label="Help"
          className="absolute right-[25px] bottom-[11px] flex h-[75px] w-[75px] items-center justify-center rounded-full bg-[#e62e25] font-[Inter] text-[40px] font-light text-white shadow-[0_2px_12px_rgba(0,0,0,0.35)]"
        >
          ?
        </button>
      </main>

      <Taskbar />
    </div>
  );
}
